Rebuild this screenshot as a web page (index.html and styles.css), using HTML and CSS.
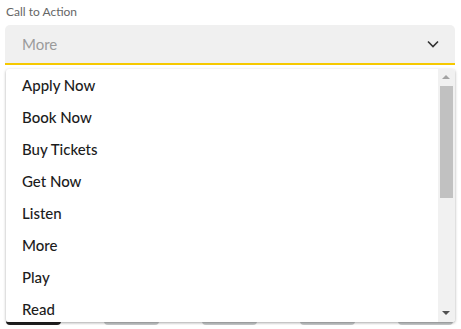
FILE: index.html
```html
<!DOCTYPE html>
<html>
<head>
<meta charset="utf-8">
<link rel="stylesheet" href="styles.css">
</head>
<body>
<div class="field">
  <div class="label">Call to Action</div>
  <div class="select">
    <span class="value">More</span>
    <svg class="chev" width="12" height="8" viewBox="0 0 12 8"><path d="M1 1.5 L6 6.5 L11 1.5" fill="none" stroke="#333" stroke-width="1.6"/></svg>
  </div>
  <div class="tabs">
    <div class="tab active"></div>
    <div class="tab"></div>
    <div class="tab"></div>
    <div class="tab"></div>
    <div class="tab"></div>
  </div>
  <div class="menu">
    <ul class="options">
      <li>Apply Now</li>
      <li>Book Now</li>
      <li>Buy Tickets</li>
      <li>Get Now</li>
      <li>Listen</li>
      <li>More</li>
      <li>Play</li>
      <li>Read</li>
    </ul>
    <div class="scrollbar">
      <div class="arrow up"></div>
      <div class="track"><div class="thumb"></div></div>
      <div class="arrow down"></div>
    </div>
  </div>
</div>
</body>
</html>
```
FILE: styles.css
```css
* { box-sizing: border-box; }
html, body { margin: 0; padding: 0; background: #fff; }
body { font-family: Lato, "Open Sans", sans-serif; }
.field { position: relative; padding: 4px 6px 0 5px; }
.label { font-size: 12px; line-height: 16px; color: #666; padding-left: 1px; margin-bottom: 5px; }
.select {
  height: 40px;
  background: #f0f0f0;
  border-radius: 5px 5px 0 0;
  border-bottom: 2px solid #f6c900;
  display: flex;
  align-items: center;
  justify-content: space-between;
  padding: 0 16px 0 17px;
}
.value { font-size: 15px; color: #9b9b9b; }
.tabs { display: flex; gap: 43px; margin-top: 230px; padding-left: 1px; }
.tab { width: 55px; height: 30px; border-bottom: 3px solid #c8cbcc; border-radius: 0 0 4px 4px; }
.tab.active { border-bottom-color: #222; }
.menu {
  position: absolute;
  left: 6px;
  top: 69px;
  width: 449px;
  height: 253px;
  background: #fff;
  border-radius: 3px;
  box-shadow: 0 1px 3px rgba(0,0,0,0.35);
  display: flex;
  overflow: hidden;
}
.options { list-style: none; margin: 0; padding: 0; flex: 1; overflow: hidden; }
.options li {
  height: 32px;
  line-height: 32px;
  padding-left: 16px;
  font-size: 15px;
  font-weight: 500;
  color: #1c1c1c;
}
.scrollbar { width: 17px; background: #f1f1f1; display: flex; flex-direction: column; align-items: center; }
.arrow { height: 17px; width: 17px; position: relative; }
.arrow::after { content: ""; position: absolute; left: 4px; border-left: 4.5px solid transparent; border-right: 4.5px solid transparent; }
.arrow.up::after { top: 6px; border-bottom: 4px solid #a3a3a3; }
.arrow.down::after { top: 6px; border-top: 4px solid #505050; }
.track { flex: 1; width: 100%; padding: 0 2px; }
.thumb { height: 112px; background: #c1c1c1; }
```
